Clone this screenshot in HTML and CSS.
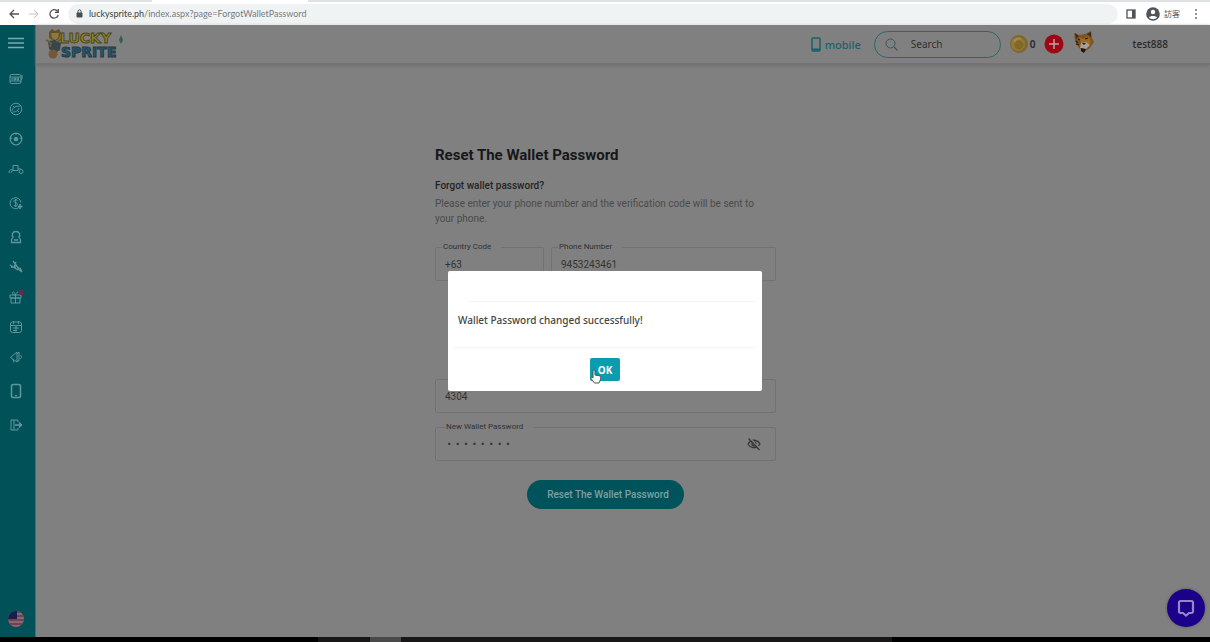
FILE: index.html
```html
<!DOCTYPE html>
<html lang="en">
<head>
<meta charset="utf-8">
<title>Reset The Wallet Password</title>
<link rel="stylesheet" href="styles.css">
</head>
<body>
<div class="browser">
  <div class="tabstrip"><div class="tab"></div></div>
  <div class="toolbar">
    <button class="tool" aria-label="Back"><svg width="12" height="12" viewBox="0 0 12 12"><path d="M11 6H2M6 2 2 6l4 4" stroke="#505357" stroke-width="1.300"/></svg></button>
    <button class="tool" aria-label="Forward"><svg width="12" height="12" viewBox="0 0 12 12"><path d="M1 6h9M6 2l4 4-4 4" stroke="#bfc2c5"/></svg></button>
    <button class="tool" aria-label="Reload"><svg width="12" height="12" viewBox="0 0 12 12"><path d="M9.600 3.500A4.200 4.200 0 1 0 10.200 7M10.300 1v3.300H7" stroke="#505357" stroke-width="1.300"/></svg></button>
    <div class="address">
      <svg width="7" height="9" viewBox="0 0 7 9"><rect x=".5" y="3.500" width="6" height="5" rx="1" fill="#4a4d50"/><path d="M2 4V2.300a1.500 1.500 0 0 1 3 0V4" stroke="#4a4d50"/></svg>
      <span class="url">luckysprite.ph<span class="path">/index.aspx?page=ForgotWalletPassword</span></span>
    </div>
    <div class="tools-right">
      <svg width="10" height="10" viewBox="0 0 10 10"><rect x="1" y="1" width="8" height="8" stroke="#505357" stroke-width="1.300"/><path d="M6 1h3v8H6z" fill="#505357"/></svg>
      <svg width="14" height="14" viewBox="0 0 14 14"><circle cx="7" cy="7" r="6.800" fill="#505357"/><circle cx="7" cy="5" r="2.200" fill="#fff"/><path d="M3 10.500c1-2 7-2 8 0-2 2.300-6 2.300-8 0z" fill="#fff"/></svg>
      <span class="guest">訪客</span>
      <svg width="4" height="12" viewBox="0 0 4 12" fill="#6a6d70"><g fill="#6a6d70"><circle cx="2" cy="2" r="1"/><circle cx="2" cy="6" r="1"/><circle cx="2" cy="10" r="1"/></g></svg>
    </div>
  </div>
</div>

<div class="app">
  <nav class="sidebar">
    <button class="menu" aria-label="Menu"><svg width="16" height="12" viewBox="0 0 16 12"><path d="M0 1.500h16M0 6h16M0 10.500h16" stroke="#7ba9ad" stroke-width="1.600"/></svg></button>
    <a href="#" aria-label="Slots"><svg width="14" height="14" viewBox="0 0 14 14"><rect x="1" y="2.500" width="11" height="9" rx="1.500"/><path d="M1 5h11M1 9h11M3 6v2M5 6h1.500v2H5zM8 6h1.500v2H8zM12 8l1-1V3"/></svg></a>
    <a href="#" aria-label="Live casino"><svg width="14" height="14" viewBox="0 0 14 14"><circle cx="7" cy="7" r="5.800"/><path d="M3 9c1-4 4-5 8-5M3.500 10.500C5 9 8 11 10 6M4 4l2 2M8 8l2 2"/></svg></a>
    <a href="#" aria-label="Sports"><svg width="14" height="14" viewBox="0 0 14 14"><circle cx="7" cy="7" r="5.800" stroke-width="1.300"/><path d="M7 5 9 6.500 8.300 8.700H5.700L5 6.500z" fill="#5f979b"/><path d="M7 1.500v1.500M12 6l-1.300.3M10.500 11.500l-.8-1M3.500 11.500l.8-1M2 6l1.300.3"/></svg></a>
    <a href="#" aria-label="Fishing"><svg width="16" height="14" viewBox="0 0 16 14"><path d="M1 11c0-3 2-4 4-3M5 3.500h5v5H5zM5 8.500C3 9 3 11 3 11M10 7c2-1 3 0 3 1"/><circle cx="13" cy="9.500" r="2"/></svg></a>
    <a href="#" class="section" aria-label="Deposit"><svg width="14" height="14" viewBox="0 0 14 14"><path d="M10 11.500A5.500 5.500 0 1 1 12 6.500M8.500 4.500C7 3 4.500 4 5 5.500s3.500 1 3.500 3-2.500 2-3.500.8M6.700 3v8"/><path d="M11 8v5M9 10.500h4.500" stroke-width="1.500"/></svg></a>
    <a href="#" class="section" aria-label="Profile"><svg width="14" height="14" viewBox="0 0 14 14"><path d="M4.500 7.500C2 5 3.500 1.500 7 1.500s5 3.500 2.500 6M4.500 7.500C3 8 2.500 9 2.500 10v2.500h9V10c0-1-.5-2-2-2.500M5 10h4" stroke-width="1.300"/></svg></a>
    <a href="#" aria-label="Promotions"><svg width="14" height="14" viewBox="0 0 14 14"><path d="m1 5 8 5M4 1l6 8M7 2l-2 5M2 7l5 0M9 9l4 3-2-4z" stroke-width="1.300"/></svg></a>
    <a href="#" aria-label="Rewards"><svg width="16" height="14" viewBox="0 0 16 14"><path d="M2 5h11v3H2zM3 8h9v5H3zM7.500 5v8M7.500 5C4 5 4 1.500 5.500 2s2 3 2 3 1-3 2.500-3"/><circle cx="13" cy="2.500" r="2.500" fill="#792445" stroke="none"/></svg></a>
    <a href="#" aria-label="Calendar"><svg width="14" height="14" viewBox="0 0 14 14"><rect x="1.500" y="2" width="11" height="10.500" rx="2"/><path d="M1.500 5.500h11M4.500 1v3M9.500 1v3M4 8h6M4 10.500h4M7 5.500v6"/></svg></a>
    <a href="#" aria-label="News"><svg width="14" height="14" viewBox="0 0 14 14"><path d="M1.500 7.500 8 2v10zM4 9.500l1 3M8 4l2-2v9H8M11 5c2 1 2 3 0 4"/></svg></a>
    <a href="#" class="section" aria-label="App"><svg width="14" height="16" viewBox="0 0 14 16"><rect x="2.500" y="1.500" width="9" height="13" rx="1.500" stroke-width="1.500"/><path d="M6 12.500h2"/></svg></a>
    <a href="#" class="section" aria-label="Log out"><svg width="14" height="14" viewBox="0 0 14 14"><path d="M9 4V2H2v10h7v-2M5 2v10"/><path d="M6 7h7M10 4.500 12.500 7 10 9.500" stroke-width="1.500"/></svg></a>
    <button class="flag" aria-label="Language"><svg width="16" height="16" viewBox="0 0 16 16"><clipPath id="round"><circle cx="8" cy="8" r="8"/></clipPath><g clip-path="url(#round)"><path fill="#806c76" d="M0 0h16v16H0z"/><path d="M0 1h16M0 5h16M0 9h16M0 13h16" stroke="#7a3e4d" stroke-width="2"/><path fill="#14204f" d="M0 0h9v8H0z"/></g></svg></button>
  </nav>

  <div class="content">
    <header class="header">
      <a href="#" class="logo" aria-label="Lucky Sprite"><svg width="80" height="32" viewBox="0 0 80 32">
        <path d="M4 4l3-3 3 2 4-2 2 4-2 6-5 2-5-3z" fill="#62512b"/><path d="M6 5h8l-1 5-3 2-3-2z" fill="#92773c"/>
        <path d="M3 13l7-1 6 3-1 7-5 3-6-4z" fill="#37464a"/><path d="M1 12l5 3-1 4M12 14l4-3" stroke="#6c5a32" stroke-width="2"/>
        <circle cx="8" cy="26" r="4.500" fill="#765638"/>
        <text x="15" y="15" class="logo-top">LUCKY</text><text x="16" y="29" class="logo-bottom">SPRITE</text>
        <path d="M76 7l2 5-2 4-2-4z" fill="#345e50"/></svg></a>
      <div class="header-tools">
        <a href="#" class="mobile"><svg width="10" height="15" viewBox="0 0 10 15"><rect x="1" y="1" width="8" height="13" rx="1" stroke="#15636a" stroke-width="1.400"/><path d="M1 12.500h8" stroke="#15636a" stroke-width="2"/></svg>mobile</a>
        <label class="search"><svg width="13" height="13" viewBox="0 0 13 13"><circle cx="5.500" cy="5.500" r="4.500" stroke="#3b5658"/><path d="m9 9 3.500 3.500" stroke="#3b5658" stroke-width="1.200"/></svg><input type="text" placeholder="Search" aria-label="Search"></label>
        <div class="balance"><svg width="18" height="18" viewBox="0 0 18 18"><circle cx="9" cy="9" r="9" fill="#80662e"/><circle cx="8" cy="9" r="7" fill="#94783b"/><circle cx="9" cy="10" r="4.500" fill="#836729"/><path d="M4 7c1-3 4-4 7-3" stroke="#a68c4c" stroke-width="1.500"/></svg>0</div>
        <button class="add" aria-label="Add funds"><svg width="20" height="20" viewBox="0 0 20 20"><circle cx="10" cy="10" r="9.500" fill="#9d0714"/><path d="M10 5v10M5 10h10" stroke="#bfa3a6" stroke-width="1.500"/></svg></button>
        <svg class="avatar" width="22" height="22" viewBox="0 0 22 22"><path d="M1 2l5 2 6-1 6-3 1 7 2 4-4 6-6 4-5-4-4-7z" fill="#7f531e"/><path d="M6 6l4 2 5-3 3 6-4 5-5-1z" fill="#9b6a22"/><path d="M2 2l4 3-3 3zM14 3l4-2v5z" fill="#3f2b20"/><path d="M8 12l5-1 4 3-5 5-5-2z" fill="#a9a095"/><path d="M9 12h4l-2 2zM8 17l5 1-2 4-3-2z" fill="#17171a"/><path d="M5 8l2 1M12 8l3-1M3 10l2 2M3 13l3 1" stroke="#251b17" stroke-width="1.300"/></svg>
        <span class="user">test888</span>
      </div>
    </header>

    <main class="main">
      <form class="reset">
        <h1>Reset The Wallet Password</h1>
        <h2>Forgot wallet password?</h2>
        <p>Please enter your phone number and the verification code will be sent to your phone.</p>
        <div class="row">
          <div class="field code"><label for="country">Country Code</label><input id="country" type="text" value="+63"></div>
          <div class="field"><label for="phone">Phone Number</label><input id="phone" type="text" value="9453243461"></div>
        </div>
        <div class="field verify"><input type="text" value="4304" aria-label="Verification code"></div>
        <div class="field"><label for="password">New Wallet Password</label><input id="password" class="dots" type="text" value="········">
          <button type="button" class="eye" aria-label="Show password"><svg width="14" height="14" viewBox="0 0 14 14"><path d="M1 7c3-5 9-5 12 0-3 5-9 5-12 0z" stroke="#383838" stroke-width="1.300"/><circle cx="7" cy="7" r="2" stroke="#383838" stroke-width="1.300"/><path d="m2.500.800 11 11.500" stroke="#808080" stroke-width="1.500"/><path d="m1.500 1.500 11 11.500" stroke="#383838" stroke-width="1.300"/></svg></button></div>
        <button type="button" class="submit">Reset The Wallet Password</button>
      </form>
    </main>
  </div>

  <div class="dialog" role="alertdialog" aria-labelledby="message">
    <div class="dialog-head"></div>
    <div class="dialog-body" id="message">Wallet Password changed successfully!</div>
    <div class="dialog-foot"><button class="ok">OK<svg class="cursor" width="12" height="15" viewBox="0 0 12 15"><path d="M3 8V2c0-1.500 2-1.500 2 0v4l4 .7c1.500.3 2 1 1.700 2.500L10 12l-1 2H4.500L1 9.500C.3 8.300 1.500 7.500 3 9z" fill="#fff" stroke="#46545a"/></svg></button></div>
  </div>
  <button class="chat" aria-label="Chat"><svg width="18" height="18" viewBox="0 0 18 18"><path d="M3.500 2h11A1.500 1.500 0 0 1 16 3.500v9a1.500 1.500 0 0 1-1.500 1.500H12l-3 2.500L6 14H3.500A1.500 1.500 0 0 1 2 12.500v-9A1.500 1.500 0 0 1 3.500 2z" stroke="#9387c6" stroke-width="2.200"/></svg></button>
</div>
<div class="taskbar"><div class="tasks"><div class="active"></div></div></div>
</body>
</html>
```
FILE: styles.css
```css
* { box-sizing: border-box; }
body {
  margin: 0;
  min-height: 100vh;
  display: flex;
  flex-direction: column;
  background: #808080;
  font-family: Roboto, "Liberation Sans", sans-serif;
  font-size: 10px;
}
svg { fill: none; flex: none; display: block; }
button { border: 0; padding: 0; background: none; font: inherit; }
a { text-decoration: none; }
input { border: 0; outline: 0; background: none; font: inherit; min-width: 0; width: 100%; padding: 0; }

.browser { background: #fff; }
.tabstrip { height: 2px; background: #dfe2e5; padding-left: 152px; }
.tab { width: 156px; height: 2px; background: #fff; }
.toolbar { height: 23px; display: flex; align-items: center; padding: 0 12px 0 8px; gap: 8px; }
.address {
  flex: 1;
  height: 20px;
  border-radius: 10px;
  background: #f0f3f4;
  display: flex;
  align-items: center;
  gap: 6px;
  padding-left: 8px;
}
.url { font-family: Lato, sans-serif; font-size: 9px; color: #3c4043; }
.path { color: #777b7f; }
.tools-right { display: flex; align-items: center; gap: 8px; color: #505357; font-size: 8px; }
.tools-right svg:first-child { margin-right: 2px; }
.guest { font-family: "Noto Sans CJK TC", sans-serif; line-height: 12px; margin: 0 6px 0 -4px; }

.app { flex: 1; display: grid; grid-template-columns: 36px 1fr; position: relative; }
.sidebar {
  background: #005158;
  border-right: 1px solid #3f7376;
  display: flex;
  flex-direction: column;
  align-items: center;
  padding: 10px 4px 10px 0;
}
.sidebar a { height: 30px; display: flex; align-items: center; }
.sidebar a svg { stroke: #5f979b; }
.sidebar .section { margin-top: 4px; }
.menu { margin: 2px 0 15px; }
.flag { margin-top: auto; }

.content { display: flex; flex-direction: column; }
.header {
  height: 40px;
  display: flex;
  align-items: center;
  justify-content: space-between;
  padding: 0 42px 0 9px;
  border-bottom: 2px solid #747474;
  box-shadow: 0 1px 3px #6f6f6f;
}
.logo-top, .logo-bottom { font: 700 14px "DejaVu Sans", sans-serif; stroke-width: 1px; }
.logo-top { fill: #918426; stroke: #4c481e; }
.logo-bottom { fill: #2c5871; stroke: #1f3c47; }
.header-tools { display: flex; align-items: center; font-family: "Noto Sans", sans-serif; color: #272727; }
.mobile { display: flex; align-items: center; gap: 4px; color: #16646a; font-size: 11px; font-weight: 500; margin-right: 13px; }
.search {
  width: 127px;
  height: 27px;
  border: 1px solid #27686c;
  border-radius: 14px;
  display: flex;
  align-items: center;
  gap: 13px;
  padding: 0 10px;
}
.search input { font-size: 10px; }
.search input::placeholder { color: #303030; opacity: 1; }
.balance { display: flex; align-items: center; gap: 2px; margin: 0 8px 0 9px; font-size: 10px; font-weight: 600; }
.avatar { margin: 0 38px 4px 9px; }
.user { font-size: 10px; font-weight: 500; }

.main { flex: 1; display: flex; justify-content: center; align-items: flex-start; padding: 79px 35px 40px 0; }
.reset { width: 341px; display: flex; flex-direction: column; }
h1 { margin: 0; font-size: 15px; line-height: 22px; font-weight: 700; color: #17171a; }
h2 { margin: 13px 0 3px; font-size: 10px; line-height: 14px; font-weight: 500; color: #242424; }
p { margin: 0; padding-right: 16px; font-size: 10px; line-height: 15px; color: #4b4b4b; }
.row { display: grid; grid-template-columns: 109px 1fr; gap: 7px; margin-top: 21px; }
.field {
  position: relative;
  height: 34px;
  border: 1px solid #727272;
  border-radius: 2px;
  display: flex;
  align-items: center;
  padding: 0 14px 0 9px;
  color: #333;
}
.field label {
  position: absolute;
  top: -6px;
  left: 6px;
  padding: 0 10px 0 1px;
  background: #808080;
  font-size: 8px;
  line-height: 10px;
  color: #303030;
}
.field input { color: #333; }
.field label[for="password"] { left: 9px; }
.verify { margin: 98px 0 14px; }
.field .dots { font: 700 14px "Liberation Mono", monospace; }
.submit {
  align-self: center;
  margin-top: 19px;
  height: 29px;
  padding: 0 15px 0 20px;
  border-radius: 15px;
  background: #00535a;
  color: #7ca1a3;
  font-size: 10px;
  font-weight: 500;
}

.dialog {
  position: absolute;
  top: 246px;
  left: 50%;
  transform: translateX(-50%);
  width: 314px;
  padding: 0 6px;
  border-radius: 2px;
  background: #fff;
}
.dialog-head { height: 31px; margin-left: 14px; border-bottom: 1px solid #f4f4f4; }
.dialog-body {
  height: 46px;
  padding: 10px 4px;
  border-bottom: 1px solid #f4f4f4;
  font: 500 10px/16px "Noto Sans", sans-serif;
  color: #444;
}
.dialog-foot { height: 43px; display: flex; justify-content: center; align-items: center; }
.ok {
  position: relative;
  width: 30px;
  height: 23px;
  border-radius: 2px;
  background: #0b9cad;
  color: #fff;
  font: 700 10px "Noto Sans", sans-serif;
}
.cursor { position: absolute; left: 0; bottom: -3px; }
.chat {
  position: absolute;
  right: 5px;
  bottom: 10px;
  width: 38px;
  height: 38px;
  border-radius: 50%;
  background: #1d0089;
  display: flex;
  align-items: center;
  justify-content: center;
  box-shadow: 0 0 3px #555;
}
.taskbar { height: 5px; background: #000; padding: 0 318px; }
.tasks { height: 5px; background: #181617; padding-left: 52px; }
.active { width: 31px; height: 5px; background: #494949; }
```
